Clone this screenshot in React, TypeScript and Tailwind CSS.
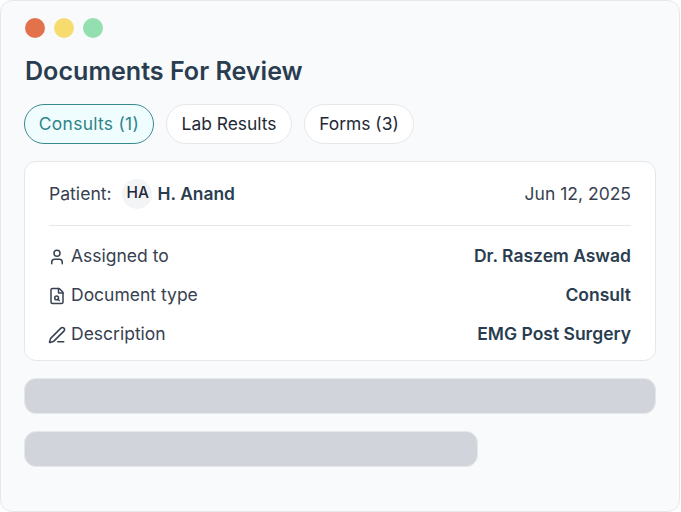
import { FileSearch, PenLine, User } from 'lucide-react'

const rows = [
  { label: 'Assigned to', value: 'Dr. Raszem Aswad', Icon: User },
  { label: 'Document type', value: 'Consult', Icon: FileSearch },
  { label: 'Description', value: 'EMG Post Surgery', Icon: PenLine },
]

export default function App() {
  return (
    <div className="h-[512px] w-[681px] bg-white font-['Inter',sans-serif]">
      <div className="h-[512px] w-[680px] rounded-[12px] border border-[#e5e7eb] bg-[#f9fafb] pt-[17px] pr-[23px] pl-[23px]">
        <div className="ml-px flex gap-[9px]">
          <span className="h-[20px] w-[20px] rounded-full bg-[#e2724c]" />
          <span className="h-[20px] w-[20px] rounded-full bg-[#f8db6f]" />
          <span className="h-[20px] w-[20px] rounded-full bg-[#93dfb0]" />
        </div>
        <h1 className="mt-[17px] ml-px text-[25.1px] leading-[32px] font-semibold text-[#2a3d50]">Documents For Review</h1>
        <div className="mt-[17px] flex gap-[12px]">
          <button className="h-[40px] w-[130px] rounded-full border border-[#3a8a8f] bg-[#effdfe] text-[17.4px] tracking-[0.3px] text-[#2f8488]">Consults (1)</button>
          <button className="h-[40px] w-[126px] rounded-full border border-[#e5e7eb] bg-white text-[17.4px] text-[#1f2937]">Lab Results</button>
          <button className="h-[40px] w-[110px] rounded-full border border-[#e5e7eb] bg-white text-[17.4px] text-[#1f2937]">Forms (3)</button>
        </div>
        <div className="mt-[17px] rounded-[12px] border border-[#e5e7eb] bg-white px-[24px] pt-[17px] pb-[6px]">
          <div className="flex items-center justify-between border-b border-[#e5e7eb] pb-[16px]">
            <div className="flex items-center">
              <span className="text-[17.6px] text-[#374151]">Patient:</span>
              <span className="ml-[10px] flex h-[30px] w-[30px] items-center justify-center rounded-full bg-[#f3f4f6] pb-[2px] pl-[2px] text-[15.4px] font-medium text-[#1f2937]">HA</span>
              <span className="ml-[6px] text-[17.4px] font-semibold text-[#2a3d50]">H. Anand</span>
            </div>
            <span className="text-[17.5px] text-[#374151]">Jun 12, 2025</span>
          </div>
          <div className="mt-[11px] flex flex-col">
            {rows.map(({ label, value, Icon }) => (
              <div key={label} className="flex h-[39px] items-center justify-between">
                <div className="flex items-center gap-[5px] text-[17.5px] text-[#374151]">
                  <Icon size={18} strokeWidth={2} className="-ml-px" />
                  <span>{label}</span>
                </div>
                <span className="text-[17.5px] font-semibold text-[#2a3d50]">{value}</span>
              </div>
            ))}
          </div>
        </div>
        <div className="mt-[17px] h-[36px] rounded-[12px] border border-[#e5e7eb] bg-[#d1d5db]" />
        <div className="mt-[17px] h-[36px] w-[454px] rounded-[12px] border border-[#e5e7eb] bg-[#d1d5db]" />
      </div>
    </div>
  )
}
